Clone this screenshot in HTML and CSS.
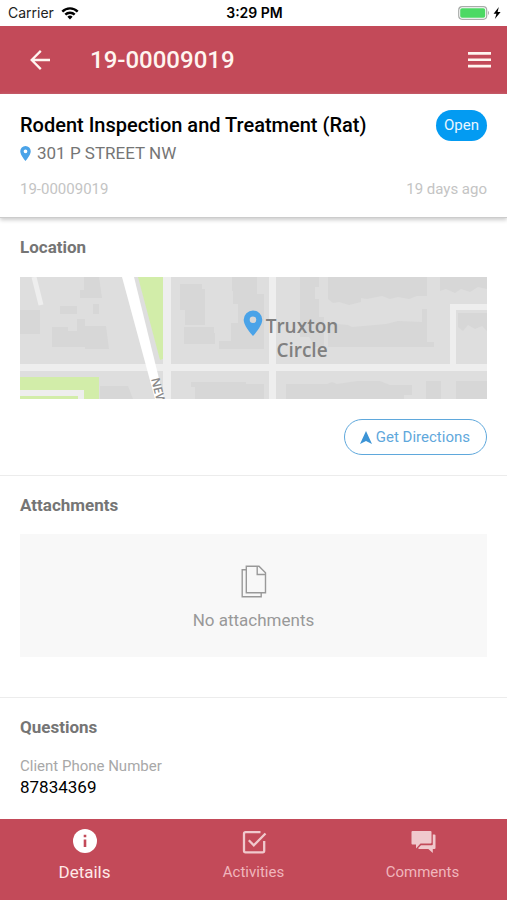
FILE: index.html
```html
<!DOCTYPE html>
<html lang="en">
<head>
<meta charset="utf-8">
<meta name="viewport" content="width=device-width, initial-scale=1">
<title>19-00009019</title>
<link rel="stylesheet" href="styles.css">
</head>
<body>
<div class="status">
  <div class="status-left">
    <span>Carrier</span>
    <svg width="18" height="14" viewBox="0 0 18 14" aria-hidden="true"><g fill="none" stroke="#000" stroke-width="2.4"><path d="M1.3 5.6a10.8 10.8 0 0 1 15.4 0"/><path d="M4.3 8.7a6.6 6.6 0 0 1 9.4 0"/></g><path d="M9 13.4l-2.6-2.7a3.7 3.7 0 0 1 5.2 0z"/></svg>
  </div>
  <time class="clock">3:29 PM</time>
  <div class="status-right">
    <svg width="43" height="14" viewBox="0 0 43 14" aria-hidden="true"><rect x=".7" y=".7" width="28" height="12.6" rx="3.5" fill="#fff" stroke="#a9adaa" stroke-width="1.2"/><rect x="2.2" y="2.2" width="25" height="9.6" rx="1.8" fill="#4cd964"/><path d="M30 4.8q2 2.2 0 4.4z" fill="#a9adaa"/><path d="M40.8 1L35.600 7.800h2.800l-1.500 5.200 5.700-7.100h-3z"/></svg>
  </div>
</div>

<header class="appbar">
  <button class="icon-btn" type="button" aria-label="Back"><svg width="20" height="20" viewBox="0 0 20 20" fill="none" stroke="#fff5f0" stroke-width="2.3"><path d="M20 10H2M10.8.9L1.7 10l9.1 9.1"/></svg></button>
  <h1>19-00009019</h1>
  <button class="icon-btn" type="button" aria-label="Menu"><svg width="23" height="16" viewBox="0 0 23 16" fill="#fff5f0"><path d="M0 0h23v2.7H0zM0 6.4h23v2.7H0zM0 12.8h23v2.7H0z"/></svg></button>
</header>

<main>
  <section class="summary">
    <div class="row">
      <h2>Rodent Inspection and Treatment (Rat)</h2>
      <span class="badge">Open</span>
    </div>
    <p class="address"><svg width="11" height="15" viewBox="0 0 14 20" aria-hidden="true"><path fill="#4aa3e8" fill-rule="evenodd" d="M7 0a7 7 0 0 0-7 7c0 5.2 7 13 7 13s7-7.800 7-13a7 7 0 0 0-7-7zm0 9.500a2.500 2.500 0 1 1 0-5 2.500 2.500 0 0 1 0 5z"/></svg>301 P STREET NW</p>
    <div class="row meta"><span>19-00009019</span><span>19 days ago</span></div>
  </section>

  <section class="location">
    <h3>Location</h3>
    <svg class="map" viewBox="0 0 467 122" role="img" aria-label="Map of Truxton Circle">
      <rect width="467" height="122" fill="#dedede"/>
      <g fill="#d7d7d7">
        <path d="M64 0h15l3 21H60V13h4zM40 29h17v8H40zM73 27h6v10h-6zM0 33h20v24H0zM32 50h16v4h9V42h8v7h21l3 23H65v-2H32zM160 7h22v5h3v36h-20V33h-5zM164 50h30v6h1v11h-31zM212 0h25v17h7v55h-45v-8h12V46h7V27h-5V14h-1zM280 0h19v10h-4v12h4v18h5v30h-9l-6-10h-9zM308 0h99v19h-10l-8 3-11-2-8 2-8-3-15 3-6-1v4l-12 3-10-3-6 1-5-4zM308 46l20 2 4 2 34-3 12-3 24 1V32h5v33h7v5H308zM420 0h47v12l-9-2-8 5-9-3-6 4-9-4-6 2zM438 36h29v18l-5-5-7 3-7-4-5 6-5-4zM190 107h54v15h-60v-8h6zM266 107h41l5-2 5 2 20-3h23l10 4h22v10h-8v5H266zM406 104h15v18h-15zM436 104h31v18h-31zM80 109h28l5 13H80zM171 105h55v17h-51v-12h-4z"/>
      </g>
      <path d="M118 0h25v82l-3 1z" fill="#d2eda9"/>
      <path d="M0 100h79v22H0z" fill="#d2eda9"/>
      <path d="M0 87h467v7H0zM143 0h8v122h-8zM249 0h7v122h-7z" fill="#eee"/>
      <path d="M433 90V30h34" fill="none" stroke="#eee" stroke-width="6"/>
      <path d="M0 116h61v8" fill="none" stroke="#eee" stroke-width="6"/>
      <path d="M14 0l7 28" fill="none" stroke="#eee" stroke-width="5"/>
      <path d="M102 0h12l30 122h-9z" fill="#fff"/>
      <text class="street" transform="translate(131 102) rotate(76)">NEW</text>
      <text class="place" x="282" y="56">Truxton</text>
      <text class="place" x="282" y="80">Circle</text>
      <path fill="#4aa3e8" fill-rule="evenodd" d="M233 33.500a9.300 9.300 0 0 0-9.300 9.300c0 6.500 9.300 16.200 9.300 16.200s9.300-9.700 9.300-16.200a9.300 9.300 0 0 0-9.300-9.300zm0 12.600a3.300 3.300 0 1 1 0-6.600 3.300 3.300 0 0 1 0 6.600z"/>
    </svg>
    <button class="directions" type="button"><svg width="12" height="13" viewBox="0 0 12 13" aria-hidden="true"><path d="M6 0l6 13-6-3-6 3z" fill="#3c94d6"/></svg>Get Directions</button>
  </section>

  <section class="attachments">
    <h3>Attachments</h3>
    <div class="empty">
      <svg width="26" height="33" viewBox="0 0 26 33" fill="none" stroke="#999" stroke-width="1.400" aria-hidden="true"><path d="M5.300 1.200H18L24.500 7.800v20H5.300zM16.200 1.200v8.300h8.300M5.300 4.800H1.200v27h19v-4"/></svg>
      <p>No attachments</p>
    </div>
  </section>

  <section class="questions">
    <h3>Questions</h3>
    <dl><dt>Client Phone Number</dt><dd>87834369</dd></dl>
  </section>
</main>

<nav class="tabs">
  <a class="active" href="#details"><svg width="26" height="26" viewBox="0 0 26 26" aria-hidden="true"><circle cx="13" cy="12" r="12" fill="#fff"/><path d="M11.700 5.700h2.600v2.600h-2.600zM11.700 10.400h2.600v7.500h-2.600z" fill="#c34a59"/></svg>Details</a>
  <a href="#activities"><svg width="26" height="26" viewBox="0 0 26 26" fill="none" stroke="#f0c9cd" stroke-width="2.300" aria-hidden="true"><path d="M19.500 3.200H4.500q-1.500 0-1.500 1.500v17.100q0 1.500 1.500 1.500h17.200q1.500 0 1.500-1.500V12M7.800 11.300l5 5L24.500 4.500"/></svg>Activities</a>
  <a href="#comments"><svg width="26" height="26" viewBox="0 0 26 26" fill="#f0c9cd" aria-hidden="true"><path d="M2.500 2h18q1 0 1 1v10.500q0 1-1 1H10.500L6 19.500v-4H2.500q-1 0-1-1V3q0-1 1-1z"/><path d="M22.800 5.500h1.700q1 0 1 1v12.600q0 1-1 1h-1.700v4l-4.500-4H9.200q-1 0-1-1l2.800-2.800h10.800q1 0 1-1z"/></svg>Comments</a>
</nav>
</body>
</html>
```
FILE: styles.css
```css
* { box-sizing: border-box; }
body {
  margin: 0;
  min-height: 100vh;
  display: flex;
  flex-direction: column;
  background: #fff;
  color: #000;
  font-family: Roboto, "Liberation Sans", sans-serif;
}
h1, h2, h3, p, dl, dd { margin: 0; }
button { font: inherit; cursor: pointer; }
svg { flex: none; display: block; }

.status {
  display: grid;
  grid-template-columns: 1fr auto 1fr;
  align-items: center;
  height: 26px;
  padding: 0 6px 0 8px;
  font: 14px/26px Inter, sans-serif;
}
.status-left { display: flex; align-items: center; gap: 7px; color: #222; }
.clock { font-weight: 600; }
.status-right { display: flex; justify-content: flex-end; }

.appbar {
  display: flex;
  align-items: center;
  height: 68px;
  padding: 0 16px 0 30px;
  background: #c34a59;
  color: #fff5f0;
}
.appbar h1 { flex: 1; margin-left: 40px; font-size: 24px; line-height: 32px; font-weight: 500; }
.icon-btn { padding: 0; border: 0; background: none; }

main { flex: 1; }
.row { display: flex; justify-content: space-between; align-items: center; }

.summary {
  height: 124px;
  padding: 15px 20px 0;
  border-bottom: 1px solid #ccc;
  box-shadow: 0 2px 4px #ccc;
}
.summary h2 { font-size: 20px; line-height: 32px; font-weight: 500; }
.badge {
  padding: 0 8px;
  border-radius: 16px;
  background: #039bf2;
  color: #e8f6ff;
  font-size: 15px;
  line-height: 31px;
}
.address { display: flex; align-items: center; gap: 6px; color: #757575; font-size: 17px; line-height: 24px; }
.meta { margin-top: 14px; color: #c4c4c4; font-size: 15px; line-height: 20px; }

h3 { color: #757575; font-size: 17px; line-height: 20px; font-weight: 700; }
.location, .attachments, .questions { padding: 19px 20px 0; }
.location { padding-bottom: 20px; }
.attachments { border-top: 1px solid #ececec; padding-bottom: 40px; }
.questions { border-top: 1px solid #ececec; }

.map { width: 100%; height: auto; margin: 20px 0; }
.place { fill: #808080; font: 600 19px "Open Sans", sans-serif; text-anchor: middle; }
.street { fill: #8a8a8a; font: 600 12px "Open Sans", sans-serif; }

.directions {
  display: flex;
  align-items: center;
  gap: 4px;
  height: 36px;
  margin-left: auto;
  padding: 0 16px 0 15px;
  border: 1px solid #5fa8dc;
  border-radius: 18px;
  background: #fff;
  color: #5fa8dc;
  font-size: 15px;
}
.empty {
  display: flex;
  flex-direction: column;
  align-items: center;
  gap: 10px;
  margin-top: 19px;
  padding: 31px 0 25px;
  background: #f8f8f8;
  color: #999;
  font-size: 17px;
  line-height: 24px;
}
dl { margin-top: 19px; }
dt { color: #a8a8a8; font-size: 15px; line-height: 20px; }
dd { font-size: 17px; line-height: 22px; }

.tabs {
  display: grid;
  grid-template-columns: repeat(3, 1fr);
  height: 81px;
  padding-top: 10px;
  background: #c34a59;
}
.tabs a {
  display: flex;
  flex-direction: column;
  align-items: center;
  gap: 7px;
  color: #f0b6bd;
  font-size: 15px;
  line-height: 20px;
  text-decoration: none;
}
.tabs .active { color: #ffe9e8; font-size: 17px; }
```
